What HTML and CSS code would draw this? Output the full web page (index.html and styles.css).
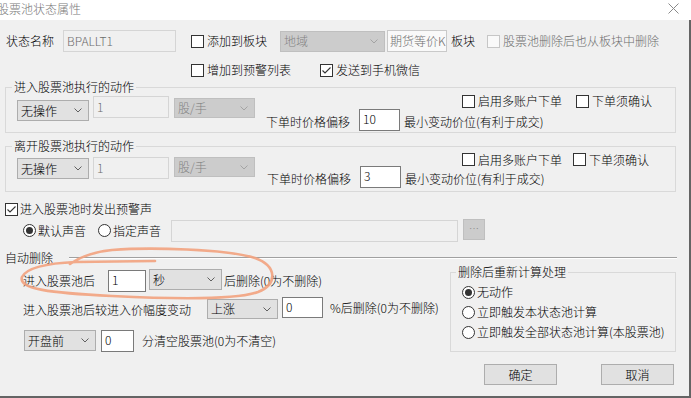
FILE: index.html
```html
<!DOCTYPE html>
<html lang="zh-CN">
  <head>
    <meta charset="UTF-8" />
    <meta name="viewport" content="width=device-width, initial-scale=1.0" />
    <title>股票池状态属性</title>
    <link rel="stylesheet" href="styles.css">
  </head>
  <body>
    <div class="titlebar">
      <span class="title">股票池状态属性</span>
      <svg class="close" width="11" height="11" viewBox="0 0 11 11">
        <path d="M0.5 0.5 L10.5 10.5 M10.5 0.5 L0.5 10.5" stroke="#8a8a8a" stroke-width="1" fill="none" />
      </svg>
    </div>

    <div class="dialog">
      <!-- name / board row -->
      <div class="row row-name">
        <span>状态名称</span>
        <span class="field off name-field">BPALLT1</span>
        <label class="check add-board"><span class="box"></span>添加到板块</label>
        <span class="combo off region-combo">地域<svg class="chev" width="8" height="5" viewBox="0 0 8 5"><path d="M0.5 0.5 L4 4 L7.5 0.5" /></svg></span>
        <span class="field light futures-field">期货等价K</span>
        <span class="board-text">板块</span>
        <label class="check off del-board"><span class="box"></span>股票池删除后也从板块中删除</label>
      </div>

      <div class="row row-alert">
        <label class="check"><span class="box"></span>增加到预警列表</label>
        <label class="check wechat"><span class="box on"><svg width="11" height="11" viewBox="0 0 11 11"><path d="M1.5 5.5 L4 8 L9.5 2.5" /></svg></span>发送到手机微信</label>
      </div>

      <!-- enter action -->
      <fieldset class="group enter">
        <legend>进入股票池执行的动作</legend>
        <div class="action">
          <div class="action-left">
            <span class="combo act-combo">无操作<svg class="chev" width="8" height="5" viewBox="0 0 8 5"><path d="M0.5 0.5 L4 4 L7.5 0.5" /></svg></span>
            <span class="field off qty-field">1</span>
            <span class="combo off unit-combo">股/手<svg class="chev" width="8" height="5" viewBox="0 0 8 5"><path d="M0.5 0.5 L4 4 L7.5 0.5" /></svg></span>
          </div>
          <div class="action-right">
            <div class="opts">
              <label class="check"><span class="box"></span>启用多账户下单</label>
              <label class="check confirm"><span class="box"></span>下单须确认</label>
            </div>
            <div class="offset">
              <span class="text">下单时价格偏移</span>
              <span class="field tick-field">10</span>
              <span class="text tick-text">最小变动价位(有利于成交)</span>
            </div>
          </div>
        </div>
      </fieldset>

      <!-- exit action -->
      <fieldset class="group exit">
        <legend>离开股票池执行的动作</legend>
        <div class="action">
          <div class="action-left">
            <span class="combo act-combo">无操作<svg class="chev" width="8" height="5" viewBox="0 0 8 5"><path d="M0.5 0.5 L4 4 L7.5 0.5" /></svg></span>
            <span class="field off qty-field">1</span>
            <span class="combo off unit-combo">股/手<svg class="chev" width="8" height="5" viewBox="0 0 8 5"><path d="M0.5 0.5 L4 4 L7.5 0.5" /></svg></span>
          </div>
          <div class="action-right">
            <div class="opts">
              <label class="check"><span class="box"></span>启用多账户下单</label>
              <label class="check confirm"><span class="box"></span>下单须确认</label>
            </div>
            <div class="offset">
              <span class="text">下单时价格偏移</span>
              <span class="field tick-field">3</span>
              <span class="text tick-text">最小变动价位(有利于成交)</span>
            </div>
          </div>
        </div>
      </fieldset>

      <!-- alarm sound -->
      <div class="row row-sound-check">
        <label class="check"><span class="box on"><svg width="11" height="11" viewBox="0 0 11 11"><path d="M1.5 5.5 L4 8 L9.5 2.5" /></svg></span>进入股票池时发出预警声</label>
      </div>
      <div class="row row-sound">
        <label class="radio"><span class="dot on"></span>默认声音</label>
        <label class="radio custom"><span class="dot"></span>指定声音</label>
        <span class="field off sound-field"></span>
        <span class="more">…</span>
      </div>

      <!-- auto delete -->
      <div class="row row-auto">
        <span>自动删除</span>
        <span class="rule"></span>
      </div>

      <div class="bottom">
        <div class="auto-left">
          <div class="row auto-row1">
            <span>进入股票池后</span>
            <span class="field sec-field">1</span>
            <span class="combo unit-sec">秒<svg class="chev" width="8" height="5" viewBox="0 0 8 5"><path d="M0.5 0.5 L4 4 L7.5 0.5" /></svg></span>
            <span class="after">后删除(0为不删除)</span>
          </div>
          <div class="row auto-row2">
            <span class="move-label">进入股票池后较进入价幅度变动</span>
            <span class="combo rise-combo">上涨<svg class="chev" width="8" height="5" viewBox="0 0 8 5"><path d="M0.5 0.5 L4 4 L7.5 0.5" /></svg></span>
            <span class="field pct-field">0</span>
            <span class="pct-text">%后删除(0为不删除)</span>
          </div>
          <div class="row auto-row3">
            <span class="combo open-combo">开盘前<svg class="chev" width="8" height="5" viewBox="0 0 8 5"><path d="M0.5 0.5 L4 4 L7.5 0.5" /></svg></span>
            <span class="field min-field">0</span>
            <span class="min-text">分清空股票池(0为不清空)</span>
          </div>
        </div>

        <fieldset class="group recalc">
          <legend>删除后重新计算处理</legend>
          <div class="recalc-list">
            <label class="radio"><span class="dot on"></span>无动作</label>
            <label class="radio"><span class="dot"></span>立即触发本状态池计算</label>
            <label class="radio"><span class="dot"></span>立即触发全部状态池计算(本股票池)</label>
          </div>
        </fieldset>
      </div>

      <div class="buttons">
        <span class="btn">确定</span>
        <span class="btn">取消</span>
      </div>
    </div>

    <!-- hand drawn highlight over the auto delete row -->
    <svg class="mark" width="691" height="398" viewBox="0 0 691 398">
      <path d="M155 261 L76 262 C52 263 27 267 22 277 C18 289 50 293 112 296 C172 299 236 300 258 292 C278 284 277 266 255 258 C226 249 150 247 112 250 C92 252 80 257 70 264" />
    </svg>
  </body>
</html>
```

FILE: styles.css
```css
* {
  box-sizing: border-box;
}
body {
  margin: 0;
  width: 691px;
  height: 398px;
  overflow: hidden;
  position: relative;
  background-color: #fff;
  color: #000;
  font-family: "Noto Sans CJK SC", "Noto Sans", sans-serif;
  font-size: 12px;
  font-weight: 300;
  line-height: 14px;
}
.titlebar {
  height: 20px;
  display: flex;
  justify-content: space-between;
  align-items: flex-start;
  background-color: #fff;
}
.title {
  margin: 2px 0 0 -3px;
  color: #7a7a7a;
}
.close {
  margin: 3px 12px 0 0;
}
.dialog {
  height: 378px;
  background-color: #f0f0f0;
  border-right: 2px solid #646464;
  border-bottom: 2px solid #646464;
  padding-top: 10px;
}
.row {
  display: flex;
  align-items: center;
  white-space: nowrap;
}

/* checkbox and radio */
.check,
.radio {
  display: inline-flex;
  align-items: center;
  white-space: nowrap;
}
.box {
  width: 13px;
  height: 13px;
  border: 1px solid #333;
  background-color: #fff;
  margin-right: 3px;
  display: flex;
  align-items: center;
  justify-content: center;
}
.box svg path {
  fill: none;
  stroke: #333;
  stroke-width: 1.1;
}
.check.off {
  color: #6d6d6d;
}
.check.off .box {
  border-color: #c6c6c6;
  background-color: #f9f9f9;
}
.dot {
  width: 13px;
  height: 13px;
  border: 1px solid #333;
  border-radius: 50%;
  background-color: #fff;
  margin-right: 2px;
  display: flex;
  align-items: center;
  justify-content: center;
}
.dot.on::after {
  content: "";
  width: 7px;
  height: 7px;
  border-radius: 50%;
  background-color: #333;
}

/* combo boxes and edit fields */
.combo {
  display: flex;
  align-items: center;
  justify-content: space-between;
  height: 21px;
  padding: 0 6px 0 3px;
  background-color: #e1e1e1;
  border: 1px solid #adadad;
  white-space: nowrap;
}
.chev path {
  fill: none;
  stroke: #606060;
  stroke-width: 1;
}
.combo.off {
  background-color: #cccccc;
  border-color: #bfbfbf;
  color: #838383;
}
.combo.off .chev path {
  stroke: #a3a3a3;
}
.field {
  display: flex;
  align-items: flex-start;
  height: 22px;
  padding: 2px 3px;
  background-color: #fff;
  border: 1px solid #7a7a7a;
  overflow: hidden;
  white-space: nowrap;
}
.field.off {
  background-color: #f0f0f0;
  border-color: #d5d5d5;
  color: #6d6d6d;
}
.field.light {
  background-color: #f9f9f9;
  border-color: #c9c9c9;
  color: #6d6d6d;
}

/* first rows */
.row-name {
  height: 22px;
  padding-left: 6px;
}
.name-field {
  margin-left: 9px;
  width: 113px;
  align-items: center;
  border-color: #cccccc;
}
.add-board {
  margin-left: 15px;
}
.region-combo {
  margin-left: 13px;
  width: 105px;
}
.futures-field {
  margin-left: 2px;
  width: 60px;
  padding: 0 2px;
  align-items: center;
}
.board-text {
  margin-left: 4px;
}
.del-board {
  margin-left: 12px;
}
.row-alert {
  height: 14px;
  margin-top: 11px;
  padding-left: 191px;
}
.wechat {
  margin-left: 29px;
}

/* group boxes */
fieldset {
  margin: 0;
  padding: 0;
  min-width: 0;
  border: 1px solid #d9d9d9;
}
legend {
  padding: 0 2px;
  margin-left: 6px;
  line-height: 14px;
  white-space: nowrap;
}
.group.enter,
.group.exit {
  width: 671px;
  margin-left: 5px;
}
.group.enter {
  margin-top: 3px;
}
.group.exit {
  margin-top: 6px;
}
.action {
  display: flex;
  padding: 0 0 1px 11px;
}
.exit .action {
  padding-bottom: 3px;
}
.action-left {
  display: flex;
  align-items: flex-start;
}
.act-combo {
  width: 72px;
  margin-top: 6px;
}
.qty-field {
  width: 76px;
  margin: 2px 0 0 4px;
  padding-top: 3px;
}
.unit-combo {
  width: 81px;
  height: 20px;
  margin: 4px 0 0 5px;
}
.exit .act-combo {
  margin-top: 5px;
}
.exit .qty-field,
.exit .unit-combo {
  margin-top: 4px;
}
.action-right {
  display: flex;
  flex-direction: column;
  margin-left: 11px;
}
.opts {
  display: flex;
  align-items: center;
  height: 14px;
  padding-left: 196px;
}
.exit .opts {
  height: 13px;
}
.confirm {
  margin-left: 14px;
}
.exit .confirm {
  margin-left: 11px;
}
.offset {
  display: flex;
  align-items: flex-start;
  height: 22px;
  margin-top: 1px;
}
.exit .offset {
  margin: 0 0 0 1px;
}
.offset .text {
  margin-top: 6px;
}
.tick-field {
  width: 41px;
  margin-left: 9px;
}
.tick-text {
  margin-left: 4px;
}

/* sound */
.row-sound-check {
  height: 16px;
  margin-top: 9px;
  padding-left: 5px;
}
.row-sound-check .box {
  margin-right: 2px;
}
.row-sound {
  height: 23px;
  margin-top: 2px;
  padding-left: 23px;
}
.custom {
  margin-left: 12px;
}
.sound-field {
  width: 287px;
  margin-left: 10px;
  align-self: flex-end;
}
.more {
  width: 22px;
  height: 21px;
  margin-left: 5px;
  align-self: flex-start;
  display: flex;
  justify-content: center;
  align-items: flex-end;
  padding-bottom: 3px;
  background-color: #cccccc;
  border: 1px solid #bfbfbf;
  color: #8a8a8a;
  font-size: 10px;
}

/* auto delete */
.row-auto {
  height: 15px;
  margin-top: 8px;
  padding-left: 5px;
}
.rule {
  flex: 1;
  margin: 0 12px 0 16px;
  border-top: 1px solid #a0a0a0;
  border-bottom: 1px solid #fff;
}
.bottom {
  display: flex;
}
.auto-left {
  width: 450px;
  padding-left: 23px;
}
.auto-row1 {
  height: 23px;
  margin-top: 4px;
  align-items: flex-start;
}
.auto-row1 > span:first-child {
  margin-top: 5px;
}
.sec-field {
  width: 38px;
  margin: 1px 0 0 13px;
}
.unit-sec {
  width: 73px;
  margin-left: 3px;
}
.after {
  margin: 5px 0 0 2px;
}
.auto-row2 {
  height: 22px;
  margin-top: 5px;
  align-items: flex-start;
}
.move-label {
  margin-top: 6px;
}
.rise-combo {
  width: 71px;
  height: 20px;
  margin: 2px 0 0 16px;
}
.pct-field {
  width: 41px;
  height: 21px;
  margin-left: 4px;
}
.pct-text {
  margin: 4px 0 0 7px;
}
.auto-row3 {
  height: 22px;
  margin-top: 11px;
  align-items: flex-start;
}
.open-combo {
  width: 72px;
  margin-left: 1px;
}
.min-field {
  width: 33px;
  margin-left: 5px;
}
.min-text {
  margin: 4px 0 0 8px;
}
.group.recalc {
  width: 226px;
}
.recalc legend {
  margin-left: 5px;
}
.recalc-list {
  display: flex;
  flex-direction: column;
  padding: 3px 0 8px 11px;
}
.recalc-list .radio {
  height: 20px;
}

/* buttons */
.buttons {
  display: flex;
  gap: 44px;
  margin-top: 12px;
  padding-left: 484px;
}
.btn {
  width: 73px;
  height: 21px;
  display: flex;
  justify-content: center;
  align-items: center;
  background-color: #e1e1e1;
  border: 1px solid #adadad;
}

/* hand drawn annotation */
.mark {
  position: absolute;
  top: 0;
  left: 0;
  pointer-events: none;
}
.mark path {
  fill: none;
  stroke: #f2a27e;
  stroke-width: 2.6;
  stroke-linecap: round;
  stroke-linejoin: round;
  opacity: 0.9;
}
```
